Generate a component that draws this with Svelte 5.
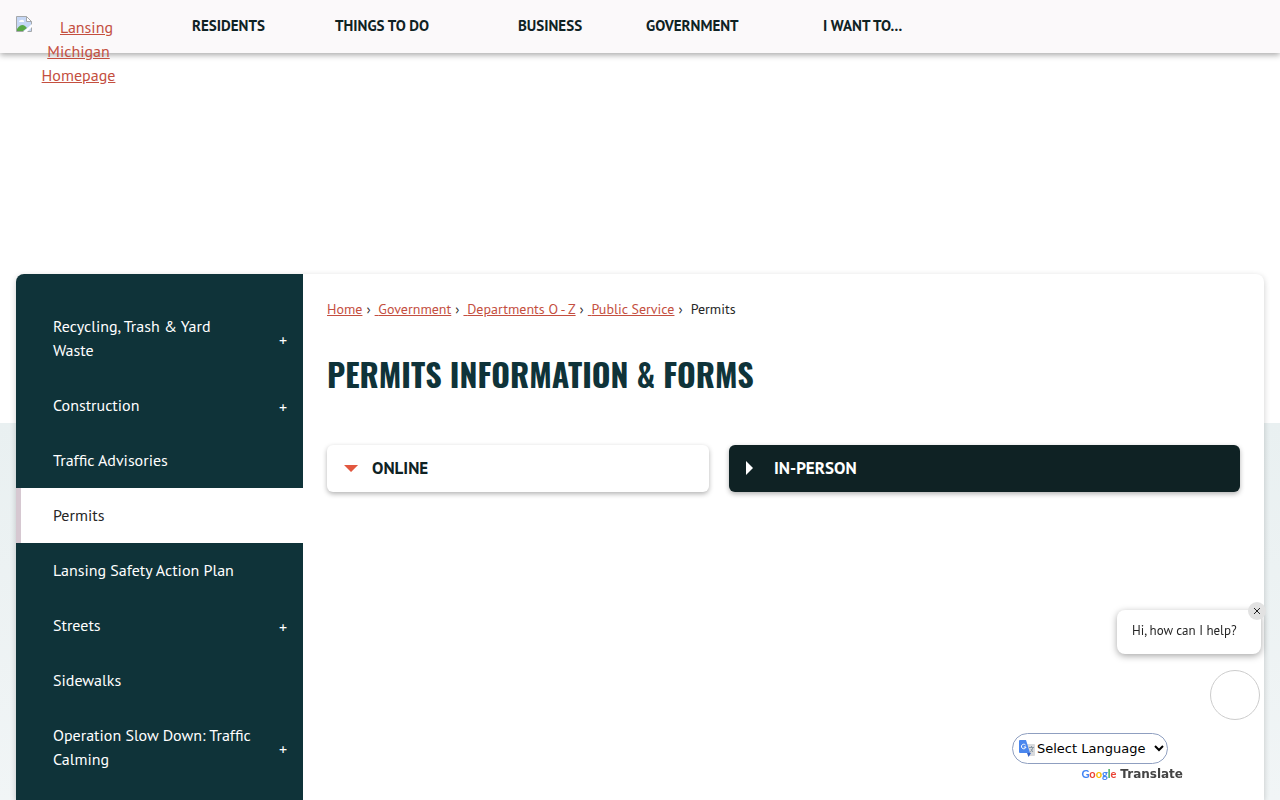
<script lang="ts">
    interface SideItem {
        label: string;
        expandable?: boolean;
        active?: boolean;
    }

    const navItems = ["Residents", "Things to Do", "Business", "Government", "I Want To..."];

    const sideItems: SideItem[] = [
        { label: "Recycling, Trash & Yard Waste", expandable: true },
        { label: "Construction", expandable: true },
        { label: "Traffic Advisories" },
        { label: "Permits", active: true },
        { label: "Lansing Safety Action Plan" },
        { label: "Streets", expandable: true },
        { label: "Sidewalks" },
        { label: "Operation Slow Down: Traffic Calming", expandable: true },
    ];

    const crumbs = ["Home", "Government", "Departments O - Z", "Public Service"];

    let tab: string = $state("online");
    let showGreeting: boolean = $state(true);
</script>

<div class="page">
    <header>
        <a class="logo" href="#home">
            <svg width="16" height="16" viewBox="0 0 16 16" aria-hidden="true">
                <path d="M.5.5h10l5 5v10H.5z" fill="#c5d7f5" stroke="#a5a8aa" />
                <path d="M3 6a2 2 0 0 1 2-2 2 2 0 0 1 3 2z" fill="#fff" />
                <path d="M1 15v-2q4-6 8-3l2 2-4 3z" fill="#58a846" />
                <path d="M10.5.5v5h5z" fill="#fff" stroke="#a5a8aa" />
                <path d="M7 16l9-8v3l-5 5z" fill="#fff" />
            </svg>
            Lansing Michigan Homepage
        </a>
        <nav class="main-nav" aria-label="Main">
            {#each navItems as item}
                <a href="#nav">{item}</a>
            {/each}
        </nav>
    </header>

    <div class="backdrop">
        <div class="card">
            <nav class="side" aria-label="Section">
                <ul>
                    {#each sideItems as item}
                        <li class:active={item.active}>
                            <a href="#section">{item.label}</a>
                            {#if item.expandable}
                                <button type="button" aria-label="Expand {item.label}">+</button>
                            {/if}
                        </li>
                    {/each}
                </ul>
            </nav>

            <main>
                <ol class="crumbs">
                    {#each crumbs as crumb, i}
                        <li><a href="#crumb">{#if i > 0}&nbsp;{/if}{crumb}</a><span>›</span></li>
                    {/each}
                    <li class="current">Permits</li>
                </ol>

                <h1>Permits Information &amp; Forms</h1>

                <div class="tabs">
                    <button
                        type="button"
                        class:open={tab === "online"}
                        onclick={() => (tab = "online")}
                    >
                        <i></i>Online
                    </button>
                    <button
                        type="button"
                        class:open={tab === "person"}
                        onclick={() => (tab = "person")}
                    >
                        <i></i>In-Person
                    </button>
                </div>
            </main>
        </div>
    </div>

    <div class="chat">
        {#if showGreeting}
            <div class="greeting">
                Hi, how can I help?
                <button type="button" aria-label="Close" onclick={() => (showGreeting = false)}>
                    <svg width="8" height="8" viewBox="0 0 8 8">
                        <path d="M1 1l6 6M7 1L1 7" stroke="#222" fill="none" />
                    </svg>
                </button>
            </div>
        {/if}
        <button type="button" class="bubble" aria-label="Open chat"></button>
    </div>

    <div class="translate">
        <div class="picker">
            <svg width="16" height="17" viewBox="0 0 16 17" aria-hidden="true">
                <path d="M6 4h9q1 0 1 1v10q0 1-1 1h-5z" fill="#d8dadd" />
                <path d="M10 7.500h5M12.500 6v1.500M14 7.500q-1 3-3 5M12 9q1 2 2 3" stroke="#8c9aa5" fill="none" />
                <path d="M8 13h4l-2.500 4z" fill="#3561c4" />
                <path d="M1 0h6l4 13H1q-1 0-1-1V1q0-1 1-1z" fill="#4a86ee" />
                <path d="M6.500 5A2.300 2.300 0 1 0 7 7H4.800" stroke="#fff" fill="none" />
            </svg>
            <select aria-label="Language Translate Widget">
                <option>Select Language</option>
            </select>
        </div>
        <a href="#translate">
            <span class="google"
                ><span class="blue">G</span><span class="red">o</span><span class="yellow">o</span><span
                    class="blue">g</span><span class="green">l</span><span class="red">e</span></span
            >
            Translate
        </a>
    </div>
</div>

<style>
    :global(body) {
        margin: 0;
        background: #fff;
    }

    .page {
        min-height: 100vh;
        display: flex;
        flex-direction: column;
        font-family: "PT Sans", Lato, "Noto Sans", sans-serif;
        font-size: 16px;
        line-height: 24px;
        color: #262626;
    }

    a {
        color: #c44f3f;
    }

    button {
        font: inherit;
        cursor: pointer;
    }

    header {
        display: flex;
        align-items: flex-start;
        height: 53px;
        padding: 0 16px;
        background: #fbf9fa;
        box-shadow: 0 2px 6px rgba(0, 0, 0, 0.35);
    }

    .logo {
        width: 125px;
        margin: 15px 51px 0 0;
        text-align: center;
    }

    .logo svg {
        float: left;
        margin-top: 1px;
    }

    .main-nav {
        display: grid;
        grid-template-columns: 143px 183px 128px 177px auto;
        padding-top: 14px;
    }

    .main-nav a {
        color: #0f2224;
        font-size: 15px;
        font-weight: 700;
        text-decoration: none;
        text-transform: uppercase;
        white-space: nowrap;
    }

    .backdrop {
        flex: 1;
        display: flex;
        margin-top: 221px;
        padding: 0 16px;
        background: linear-gradient(#e9f0f1, #f4f7f8) 0 149px no-repeat;
    }

    .card {
        flex: 1;
        display: flex;
        background: #fff;
        border-radius: 8px 8px 0 0;
        box-shadow: 0 2px 6px rgba(0, 0, 0, 0.2);
    }

    .side {
        width: 23%;
        padding-top: 25px;
        box-sizing: border-box;
        background: #0f3339;
        border-radius: 8px 0 0 0;
    }

    ul,
    ol {
        list-style: none;
        margin: 0;
        padding: 0;
    }

    .side li {
        display: flex;
        align-items: center;
        padding: 15px 14px 16px 32px;
        border-left: 5px solid #0f3339;
    }

    .side li.active {
        background: #fff;
        border-left-color: #d6c8d1;
    }

    .side a {
        flex: 1;
        padding-right: 24px;
        color: #fff;
        text-decoration: none;
    }

    .side .active a {
        color: #262626;
    }

    .side button {
        width: 12px;
        padding: 4px 0 0;
        border: 0;
        background: none;
        color: #fff;
        line-height: 20px;
    }

    main {
        flex: 1;
        padding: 24px;
    }

    .crumbs {
        display: flex;
        font-size: 14px;
        line-height: 22px;
    }

    .crumbs span {
        margin: 0 4px;
    }

    .current {
        margin-left: 4px;
    }

    h1 {
        margin: 28px 0 46px;
        color: #0f3339;
        font-family: Oswald, "Liberation Sans Narrow", "Liberation Sans", sans-serif;
        font-size: 32px;
        line-height: 51px;
        font-weight: 700;
        text-transform: uppercase;
    }

    .tabs {
        display: grid;
        grid-template-columns: 382fr 511fr;
        gap: 20px;
    }

    .tabs button {
        display: flex;
        align-items: center;
        height: 47px;
        padding: 0 17px 1px;
        border: 0;
        border-radius: 6px;
        background: #0f2224;
        box-shadow: 0 2px 5px rgba(0, 0, 0, 0.3);
        color: #fff;
        font-size: 17px;
        font-weight: 700;
        text-transform: uppercase;
    }

    .tabs .open {
        background: #fff;
        color: #0f2224;
    }

    .tabs i {
        width: 14px;
        height: 14px;
        margin-right: 14px;
        background: #fff;
        clip-path: polygon(0 0, 7px 7px, 0 14px);
    }

    .tabs .open i {
        background: #e2573f;
        clip-path: polygon(0 4px, 14px 4px, 7px 11px);
    }

    .chat {
        position: fixed;
        right: 19px;
        bottom: 80px;
        display: flex;
        flex-direction: column;
        align-items: flex-end;
        gap: 16px;
    }

    .greeting {
        position: relative;
        width: 144px;
        height: 44px;
        padding: 0 15px;
        box-sizing: border-box;
        border-radius: 8px;
        background: #fff;
        box-shadow: 0 2px 7px rgba(0, 0, 0, 0.35);
        font-size: 13px;
        line-height: 42px;
        white-space: nowrap;
    }

    .greeting button {
        position: absolute;
        top: -8px;
        right: -5px;
        display: grid;
        place-items: center;
        width: 18px;
        height: 18px;
        padding: 0;
        border: 0;
        border-radius: 50%;
        background: #e2e2e2;
    }

    .bubble {
        width: 50px;
        height: 50px;
        margin-right: 1px;
        border: 1px solid #ccc;
        border-radius: 50%;
        background: #fff;
    }

    .translate {
        position: fixed;
        right: 97px;
        bottom: 16px;
        display: flex;
        flex-direction: column;
        align-items: flex-end;
        font-family: "DejaVu Sans", sans-serif;
    }

    .picker {
        display: flex;
        align-items: center;
        width: 156px;
        height: 31px;
        margin-right: 15px;
        padding: 0 0 0 6px;
        box-sizing: border-box;
        border: 1px solid #8f9fc0;
        border-radius: 16px;
        background: #fff;
    }

    .picker svg {
        margin-right: -2px;
    }

    .picker select {
        flex: 1;
        min-width: 0;
        padding: 0;
        border: 0;
        background: transparent;
        color: #000;
        font-family: inherit;
        font-size: 13px;
    }

    .translate a {
        display: flex;
        align-items: center;
        gap: 4px;
        height: 20px;
        color: #444;
        font-size: 12px;
        font-weight: 700;
        text-decoration: none;
    }

    .google {
        font-family: Lato, sans-serif;
        font-size: 11px;
        font-weight: 700;
    }

    .blue {
        color: #4285f4;
    }

    .red {
        color: #ea4335;
    }

    .yellow {
        color: #fbbc05;
    }

    .green {
        color: #34a853;
    }
</style>
